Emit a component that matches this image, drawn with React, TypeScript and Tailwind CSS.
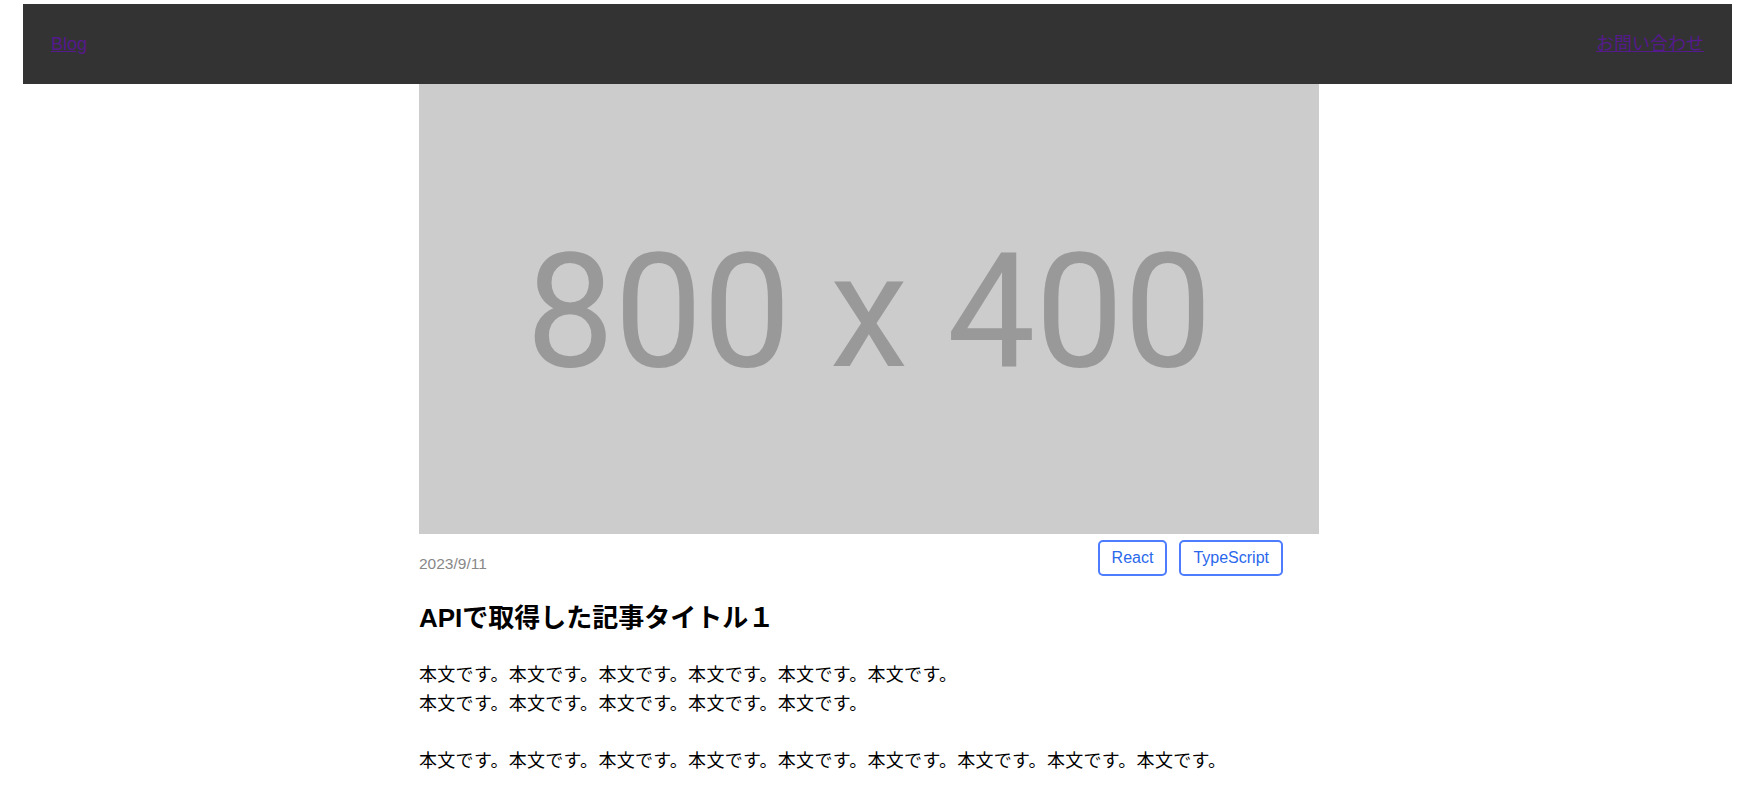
import React from "react";

const jp = "font-['Liberation_Sans','Noto_Sans_CJK_JP',sans-serif]";

function Placeholder() {
  return (
    <div className="w-[900px] h-[450px] bg-[#cccccc]">
      <svg width="900" height="450" viewBox="0 0 900 450">
        <text
          x="450"
          y="282"
          textAnchor="middle"
          fontFamily="Roboto, 'Liberation Sans', sans-serif"
          fontSize="160"
          fill="#999999"
          textLength="686"
          lengthAdjust="spacingAndGlyphs"
        >
          800 x 400
        </text>
      </svg>
    </div>
  );
}

function Tag({ label }: { label: string }) {
  return (
    <span className="h-[36px] flex items-center px-[12px] border-[2.5px] border-[#4d7cff] rounded-[5px] text-[16px] text-[#2a68ec] font-['Liberation_Sans',sans-serif] bg-white">
      {label}
    </span>
  );
}

export default function App() {
  return (
    <div className={`min-h-[792px] bg-white ${jp}`}>
      <div className="pt-[4px] pl-[23px] w-[1732px]">
        <header className="h-[80px] bg-[#333333] flex items-center justify-between px-[28px]">
          <a href="#" className="text-[18px] text-[#551a8b] underline">
            Blog
          </a>
          <a href="#" className="text-[18px] text-[#551a8b] underline">
            お問い合わせ
          </a>
        </header>
      </div>
      <div className="w-[1738px]">
        <main className="w-[900px] mx-auto">
          <Placeholder />
          <div className="flex justify-between items-start mt-[6px] pr-[36px]">
            <span className="pt-[15px] text-[15.5px] leading-[17px] text-[#888888] font-['Liberation_Sans',sans-serif]">
              2023/9/11
            </span>
            <div className="flex gap-[12px]">
              <Tag label="React" />
              <Tag label="TypeScript" />
            </div>
          </div>
          <h1 className="mt-[24px] text-[26px] leading-[36px] font-bold text-black">
            APIで取得した記事タイトル１
          </h1>
          <div className="mt-[25px] text-[18px] leading-[28.5px] tracking-[0.3px] text-black">
            <p>
              本文です。本文です。本文です。本文です。本文です。本文です。
              <br />
              本文です。本文です。本文です。本文です。本文です。
            </p>
            <p className="mt-[28.5px]">
              本文です。本文です。本文です。本文です。本文です。本文です。本文です。本文です。本文です。
            </p>
          </div>
        </main>
      </div>
    </div>
  );
}
